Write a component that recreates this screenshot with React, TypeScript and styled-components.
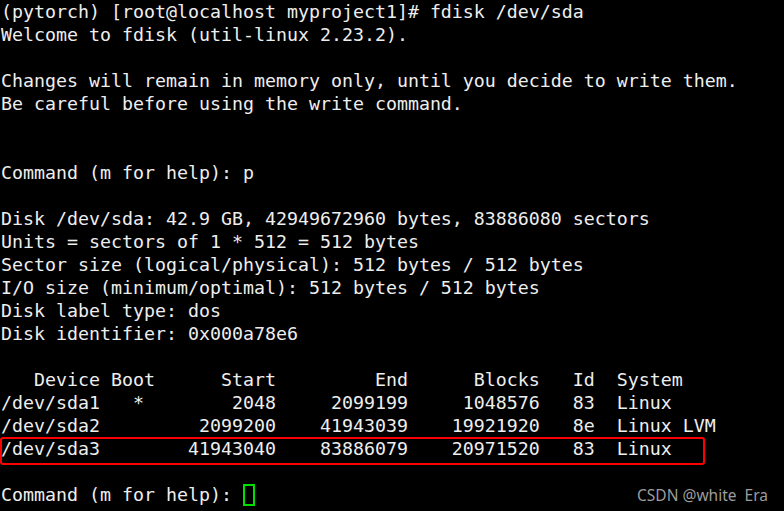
import React from 'react';
import styled, { createGlobalStyle } from 'styled-components';

const GlobalStyle = createGlobalStyle`
  html, body {
    margin: 0;
    padding: 0;
    background: #000;
  }
`;

const lines: string[] = [
  '(pytorch) [root@localhost myproject1]# fdisk /dev/sda',
  'Welcome to fdisk (util-linux 2.23.2).',
  '',
  'Changes will remain in memory only, until you decide to write them.',
  'Be careful before using the write command.',
  '',
  '',
  'Command (m for help): p',
  '',
  'Disk /dev/sda: 42.9 GB, 42949672960 bytes, 83886080 sectors',
  'Units = sectors of 1 * 512 = 512 bytes',
  'Sector size (logical/physical): 512 bytes / 512 bytes',
  'I/O size (minimum/optimal): 512 bytes / 512 bytes',
  'Disk label type: dos',
  'Disk identifier: 0x000a78e6',
  '',
  '   Device Boot      Start         End      Blocks   Id  System',
  '/dev/sda1   *        2048     2099199     1048576   83  Linux',
  '/dev/sda2         2099200    41943039    19921920   8e  Linux LVM',
  '/dev/sda3        41943040    83886079    20971520   83  Linux',
  '',
];

const App = () => {
  return (
    <>
      <GlobalStyle />
      <Terminal>
        {lines.map((text, i) => (
          <Line key={i} $highlighted={i === 19}>
            {text || ' '}
          </Line>
        ))}
        <Line>
          {'Command (m for help): '}
          <Cursor />
        </Line>
        <Watermark>{'CSDN @white  Era'}</Watermark>
      </Terminal>
    </>
  );
};
export default App;

const Terminal = styled.div`
  position: relative;
  width: 784px;
  height: 511px;
  overflow: hidden;
  background: #000;
  color: #eeeeee;
  font-family: 'DejaVu Sans Mono', 'Liberation Mono', monospace;
  font-size: 18.27px;
  line-height: 23px;
  padding-left: 1px;
  box-sizing: border-box;
`;

const Line = styled.div<{ $highlighted?: boolean }>`
  position: relative;
  height: 23px;
  white-space: pre;

  ${(p) =>
    p.$highlighted &&
    `
    &::after {
      content: '';
      position: absolute;
      left: -1px;
      top: 0;
      width: 705px;
      height: 28px;
      border: 2px solid #ff0000;
      border-radius: 3px;
      box-sizing: border-box;
    }
  `}
`;

const Cursor = styled.span`
  display: inline-block;
  width: 12px;
  height: 22px;
  border: 2px solid #00e000;
  box-sizing: border-box;
  vertical-align: -5px;
`;

const Watermark = styled.div`
  position: absolute;
  right: 16px;
  bottom: 6px;
  color: #9c9c9c;
  font-family: 'Noto Sans', 'Inter', sans-serif;
  font-size: 15.5px;
  line-height: 20px;
  white-space: pre;
`;
